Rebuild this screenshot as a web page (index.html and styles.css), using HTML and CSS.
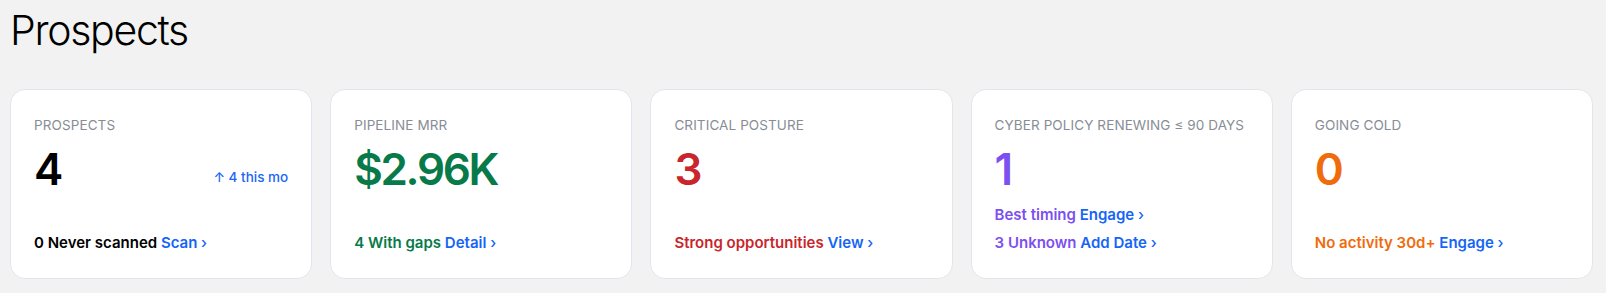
FILE: index.html
```html
<!DOCTYPE html>
<html>
<head>
<meta charset="utf-8">
<link rel="stylesheet" href="styles.css">
</head>
<body>
<main class="page">
  <h1 class="title">Prospects</h1>
  <section class="cards">
    <div class="card">
      <div class="label">PROSPECTS</div>
      <div class="value-row">
        <div class="value black">4</div>
        <div class="trend">↑ 4 this mo</div>
      </div>
      <div class="links">
        <div class="link black">0 Never scanned <span class="act">Scan <span class="chev">›</span></span></div>
      </div>
    </div>
    <div class="card">
      <div class="label">PIPELINE MRR</div>
      <div class="value-row"><div class="value green">$2.96K</div></div>
      <div class="links">
        <div class="link green">4 With gaps <span class="act">Detail <span class="chev">›</span></span></div>
      </div>
    </div>
    <div class="card">
      <div class="label">CRITICAL POSTURE</div>
      <div class="value-row"><div class="value red">3</div></div>
      <div class="links">
        <div class="link red">Strong opportunities <span class="act">View <span class="chev">›</span></span></div>
      </div>
    </div>
    <div class="card">
      <div class="label">CYBER POLICY RENEWING ≤ 90 DAYS</div>
      <div class="value-row"><div class="value purple">1</div></div>
      <div class="links two">
        <div class="link purple">Best timing <span class="act">Engage <span class="chev">›</span></span></div>
        <div class="link purple">3 Unknown <span class="act">Add Date <span class="chev">›</span></span></div>
      </div>
    </div>
    <div class="card">
      <div class="label">GOING COLD</div>
      <div class="value-row"><div class="value orange">0</div></div>
      <div class="links">
        <div class="link orange">No activity 30d+ <span class="act">Engage <span class="chev">›</span></span></div>
      </div>
    </div>
  </section>
</main>
</body>
</html>
```
FILE: styles.css
```css
* { box-sizing: border-box; }
html, body { margin: 0; padding: 0; }
body {
  background: #f2f2f2;
  font-family: Inter, "Liberation Sans", sans-serif;
  color: #111;
}
.page {
  padding: 6px 10px 0 10px;
}
.title {
  margin: 0;
  font-size: 41px;
  font-weight: 300;
  line-height: 48px;
  letter-spacing: -1.3px;
  color: #000;
}
.cards {
  margin-top: 35px;
  display: grid;
  grid-template-columns: repeat(5, 1fr);
  gap: 18px;
  width: 1583px;
}
.card {
  background: #fff;
  border: 1px solid #e1e6ee;
  border-radius: 15px;
  height: 190px;
  padding: 27px 23px 26px 23px;
  display: flex;
  flex-direction: column;
}
.label {
  font-size: 13.5px;
  color: #878d96;
  letter-spacing: 0.1px;
  line-height: 16px;
  white-space: nowrap;
}
.value-row {
  display: flex;
  justify-content: space-between;
  align-items: flex-start;
  margin-top: 10px;
}
.value {
  font-size: 44px;
  font-weight: 600;
  line-height: 52px;
  letter-spacing: -2.3px;
}
.trend {
  font-size: 13.5px;
  font-weight: 500;
  color: #1a66f5;
  margin-top: 26px;
}
.links {
  margin-top: auto;
  display: flex;
  flex-direction: column;
  gap: 10.5px;
}
.link {
  font-size: 15px;
  font-weight: 600;
  line-height: 18px;
  white-space: nowrap;
}
.act { color: #1565f7; }
.chev { font-weight: 500; }
.black { color: #000; }
.green { color: #087a4a; }
.red { color: #c8262c; }
.purple { color: #7b4ff0; }
.orange { color: #f06b0c; }
```
